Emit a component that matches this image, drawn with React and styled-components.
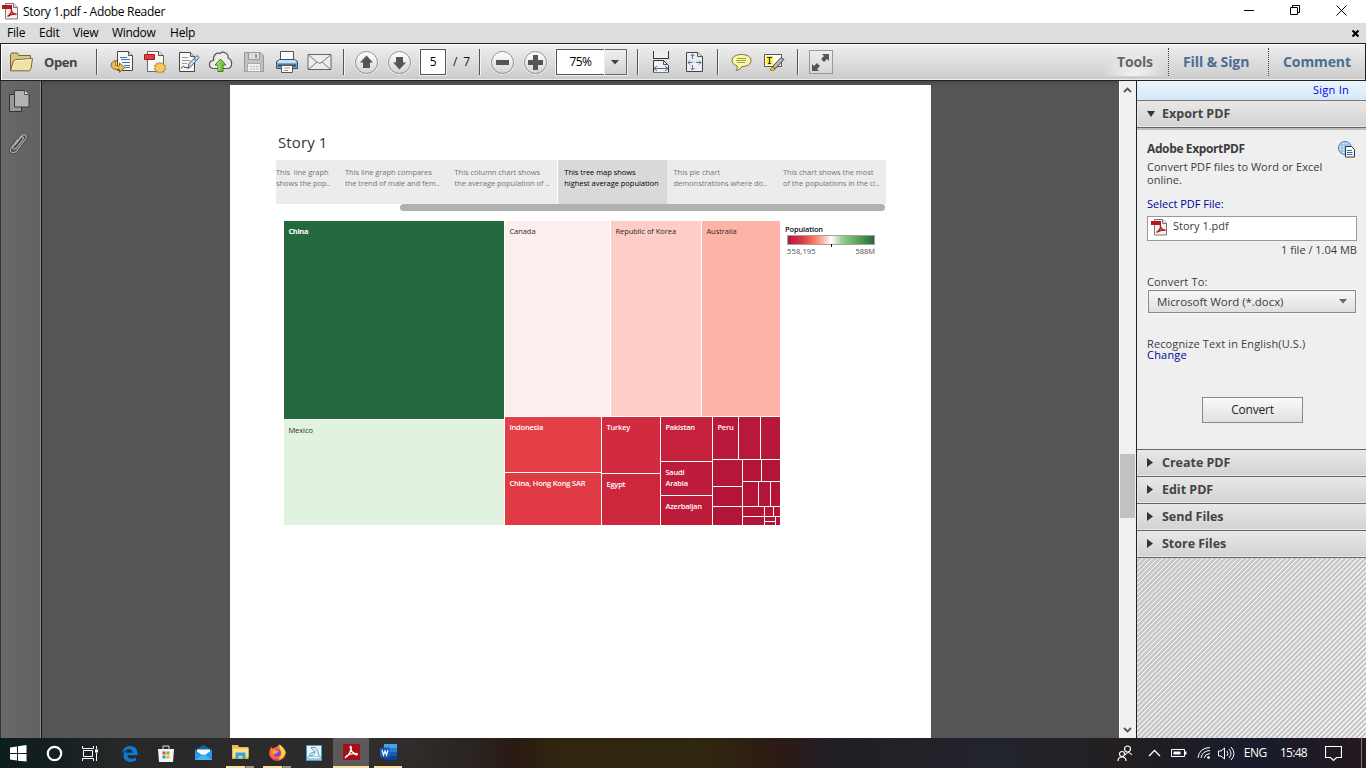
import React from "react";
import styled, { createGlobalStyle, css } from "styled-components";

const Global = createGlobalStyle`
  * { box-sizing: border-box; }
  body { margin: 0; overflow: hidden; font-family: "Open Sans", "Noto Sans", sans-serif; font-size: 12px; color: #444; }
  svg { display: block; flex: none; }
`;

const Window = styled.div`
  width: 1366px; height: 768px; display: flex; flex-direction: column; background: #555;
`;
const Text = styled.span`
  white-space: pre; display: block; line-height: ${p => p.$lh || 16}px;
  font-size: ${p => p.$size || 12}px; font-weight: ${p => p.$weight || 400};
  letter-spacing: ${p => p.$ls || 0}px; color: ${p => p.$color || "inherit"};
  margin: ${p => p.$m || 0};
`;

/* Title bar and menu */
const TitleBar = styled.header`
  height: 23px; background: #fff; color: #000; display: flex; align-items: center; padding-left: 2px;
`;
const WindowButtons = styled.div`
  margin-left: auto; display: flex; padding: 0 2px 3px 0;
`;
const WindowButton = styled.div`
  width: 46px; display: flex; justify-content: center; align-items: center;
`;
const MenuBar = styled.nav`
  height: 20px; background: #ddd; color: #000; display: flex; align-items: center; padding-left: 7px;
`;
const MenuItem = styled(Text)` width: ${p => p.$w}px; `;
const CloseDoc = styled.div` margin-left: auto; padding-right: 7px; `;

/* Toolbar */
const Toolbar = styled.div`
  height: 38px; border: 1px solid #222;
  box-shadow: inset 1px 1px 0 #fff, inset 0 -1px 0 #eee; background: linear-gradient(#efefef, #cbcbcb);
  display: flex; align-items: center; flex: none; padding-left: 8px;
`;
const OpenButton = styled.div` display: flex; align-items: center; width: 87px; gap: 10px; `;
const Divider = styled.i`
  width: 2px; height: 26px; background: #555; border-right: 1px solid #f4f4f4; margin: 0 ${p => p.$r || 0}px 0 ${p => p.$l || 0}px; flex: none;
`;
const Tool = styled.div`
  width: 33px; height: 28px; flex: none; display: flex; align-items: center; justify-content: center;
`;
const Round = styled.div`
  width: 23px; height: 23px; border-radius: 50%; border: 1px solid #929292; box-shadow: 0 0 0 1px #e9e9e9;
  background: linear-gradient(#fff, #d5d5d5); display: flex; align-items: center; justify-content: center;
`;
const Field = styled.div`
  height: 26px; width: ${p => p.$w}px; border: 1px solid #555; outline: 1px solid #eee; background: #fff; color: #000;
  display: flex; align-items: center; justify-content: center; flex: none; margin-left: 4px;
`;
const DropArrow = styled.div`
  width: 22px; height: 26px; border: 1px solid #666; border-left: 0; outline: 1px solid #eee; background: linear-gradient(#f1f1f1, #d2d2d2);
  display: flex; align-items: center; justify-content: center; flex: none;
`;
const FullScreen = styled.div`
  width: 24px; height: 24px; border: 1px solid #999; background: linear-gradient(#eee, #d6d6d6); margin-left: 10px;
  display: flex; align-items: center; justify-content: center;
`;
const ToolTabs = styled.div` margin-left: auto; height: 36px; display: flex; align-items: center; `;
const ToolTab = styled.div`
  width: ${p => p.$w}px; height: 28px; display: flex; align-items: center; padding-left: ${p => p.$pl}px;
  border-right: ${p => (p.$last ? "0" : "1px dotted #444")};
  ${p => p.$active && css`background: radial-gradient(ellipse at 50% 100%, #f3f3f3, rgba(220,220,220,0) 70%);`}
`;

/* Work area */
const Work = styled.main` flex: 1; min-height: 0; display: flex; background: #555; `;
const SideRail = styled.aside`
  width: 42px; border-left: 1px solid #333; border-right: 1px solid #161616; box-shadow: inset -1px 0 0 #8b8b8b;
  background: linear-gradient(90deg, #696969, #616161); display: flex; flex-direction: column; align-items: center; padding: 8px 6px 0 1px; gap: 19px;
`;
const Canvas = styled.section`
  flex: 1; display: flex; padding: 4px 0 0 188px; background: linear-gradient(#484848, #555 5px);
`;
const Page = styled.article` width: 701px; background: #fff; padding: 48px 0 0 46px; `;
const StoryNav = styled.div` display: flex; width: 610px; height: 44px; background: #ececec; `;
const StoryPoint = styled.div`
  width: ${p => p.$w}px; padding: 7px 0 0 ${p => p.$pl}px; color: #757575; flex: none;
  ${p => p.$active && css`background: #d9d9d9; color: #000; border-left: 1px solid #fff;`}
`;
const StoryScroll = styled.div` width: 485px; height: 7px; border-radius: 4px; background: #b1b1b1; margin: 0 0 10px 124px; `;
const Viz = styled.div` display: flex; padding-left: 8px; `;
const Split = styled.div`
  display: flex; flex-direction: ${p => (p.$col ? "column" : "row")}; gap: 1px; flex: none;
  width: ${p => (p.$w ? p.$w + "px" : "auto")}; height: ${p => (p.$h ? p.$h + "px" : "auto")};
`;
const Cell = styled.div`
  flex: none; width: ${p => p.$w}px; height: ${p => p.$h}px; background: ${p => p.$bg || "#b31539"};
  color: ${p => (p.$dark ? "#2b2b2b" : "#fff")}; padding: ${p => (p.$label ? "5px 0 0 4.4px" : 0)}; overflow: hidden;
`;
const Legend = styled.div` width: 96px; padding: 3px 0 0 5px; `;
const Ramp = styled.div`
  width: 88px; height: 10px; margin-left: 2px; border: 1px solid #a8a198; display: flex; justify-content: center;
  background: linear-gradient(90deg, #b0173f, #dd3e49 18%, #f9745f 30%, #fdb1a2 40%, #fff 50%, #93cf8e 63%, #57a85e 80%, #24693d);
`;
const Tick = styled.i` width: 1px; height: 3px; margin-top: 8px; background: #000; `;
const RampLabels = styled.div` display: flex; justify-content: space-between; width: 88px; margin-left: 2px; color: #4c4c4c; `;

/* Scroll bar */
const Scrollbar = styled.div`
  width: 17px; background: #f0f0f0; display: flex; flex-direction: column; align-items: center; padding: 6px 1px 5px 0;
  border-left: 1px solid #fff;
`;
const Thumb = styled.div` width: 15px; height: 64px; background: #c1c1c1; margin: 361px 0 auto; `;

/* Right panel */
const Panel = styled.aside` width: 230px; border-left: 1px solid #222; background: #efefef; display: flex; flex-direction: column; `;
const SignIn = styled.div`
  height: 20px; flex: none; background: linear-gradient(#eaf5fe, #d5e8f8); border-bottom: 1px solid #777;
  display: flex; justify-content: flex-end; padding-right: 17px; color: #00e;
`;
const Section = styled.div`
  height: 27px; flex: none; background: linear-gradient(#e8e8e8, #d2d2d2); border-bottom: 1px solid #666;
  border-top: ${p => (p.$top ? "1px solid #666" : "0")};
  box-shadow: inset 1px -1px 0 #e9e9e9; display: flex; align-items: center; padding: 0 0 1px 10px; gap: 7px; color: #444;
  ${p => p.$top && css`height: 28px;`}
`;
const PanelBody = styled.div`
  height: 321px; flex: none; padding: 13px 9px 0 10px; display: flex; flex-direction: column; align-items: flex-start;
  box-shadow: inset 0 2px 0 #bdbdbd; color: #3c3c3c;
`;
const Heading = styled.div` display: flex; justify-content: space-between; width: 208px; height: 19px; `;
const FileBox = styled.div`
  width: 210px; height: 25px; background: #fff; border: 1px solid #999; display: flex; align-items: flex-start; padding: 2px 3px; gap: 5px; margin-top: 5px;
`;
const Select = styled.div`
  width: 208px; height: 23px; margin: 0 0 0 1px; border: 1px solid #888; outline: 1px solid #f8f8f8; background: linear-gradient(#f8f8f8, #dfdfdf);
  display: flex; align-items: center; justify-content: space-between; padding: 0 8px 0 8px;
`;
const Button = styled.div`
  width: 101px; height: 26px; border: 1px solid #888; background: linear-gradient(#f9f9f9, #e0e0e0); color: #222;
  display: flex; align-items: center; justify-content: center; margin: 37px 0 0 55px;
`;
const Hatch = styled.div`
  flex: 1; background: repeating-linear-gradient(135deg, #fafafa 0 1px, #c8c8c8 1.4px 3.54px);
`;

/* Taskbar */
const Taskbar = styled.footer`
  height: 30px; flex: none; display: flex; color: #fff;
  background: linear-gradient(90deg, #0c1d20 0, #141f20 50px, #272829 120px, #302e2d 400px, #2a2422 470px, #2a1a12 515px, #30260f 560px, #30270f 700px, #2c1a14 780px, #211f25 830px, #22242c 1000px, #231f22 1120px, #181c2c 1250px, #24191f 1366px);
`;
const Task = styled.div`
  width: ${p => p.$w || 37}px; height: 30px; display: flex; flex-direction: column; align-items: center; flex: none;
  margin-left: ${p => p.$ml || 0}px;
`;
const Glyph = styled.div`
  flex: 1; width: ${p => (p.$on ? "36px" : "100%")}; display: flex; align-items: center; justify-content: center;
  background: ${p => (p.$on ? "#5b5959" : "none")};
`;
const Underline = styled.i`
  height: 2px; width: ${p => p.$w || 28}px;
  background: ${p => (p.$stack ? "linear-gradient(90deg,#fbdfa0 19px,#6d6450 19px,#6d6450 20px,#a39576 20px)" : "#fbdfa0")};
`;
const Tray = styled.div` margin-left: auto; display: flex; align-items: center; `;
const TrayIcon = styled.div` margin-right: ${p => p.$r}px; `;
const ShowDesktop = styled.i` width: 1px; height: 30px; background: #777; margin: 0 4px 0 19px; `;

/* Drawings */
const PdfIcon = ({ s = 17 }) => (
  <svg width={s} height={s} viewBox="0 0 17 17">
    <path d="M3.500.5h8l4 3.500v12h-12z" fill="#f5f2f2" stroke="#867575" />
    <path d="M11.500.5v4h4" fill="#ddd" stroke="#867575" />
    <path d="M0 2h10v4H0z" fill="#b51620" />
    <path d="M5.500 13.500C8 12 10.500 8.500 9.300 6.500c0 3 2.500 5 5.200 4.700c-3-.5-6 .3-9 2.300" fill="none" stroke="#b51620" strokeWidth="1.400" />
  </svg>
);
const Folder = () => (
  <svg width="25" height="20" viewBox="0 0 25 20">
    <path d="M1.500 18.500V2.800L2.500 1h6l1.400 2.500h11.600v4" fill="#d9c582" stroke="#756737" />
    <path d="M1.500 18.800L4 10l2-2.200 17.500-1.200-1.500 10-1.500 2.200z" fill="#f2e2aa" stroke="#756737" strokeLinejoin="round" />
    <path d="M5 10l2-1.400 15.500-.8" stroke="#fff6d0" fill="none" />
  </svg>
);
const Share = () => (
  <svg width="24" height="24" viewBox="0 0 24 24">
    <path d="M7.500 1.500h11l4 4v15h-15z" fill="#f7f7f7" stroke="#454545" /><path d="M18.500 1.500v4h4" fill="#ddd" stroke="#555" />
    <path d="M10 7.500h7M11 9.500h9M12 12.500h8M14 15.500h6M14 17.500h6" stroke="#3977c4" />
    <path d="M6.500 10.500C0 11 0 17 3.500 18.800c2 .8 4 .7 6 .4v3.200l5.200-4.700-5.200-4.700v2.700c-3.500.8-5.500-1-3-4.800z" fill="#f0bd4c" stroke="#8b6422" />
  </svg>
);
const CreatePdf = () => (
  <svg width="24" height="24" viewBox="0 0 24 24">
    <path d="M4.500 1.500h11l5 4v16h-16z" fill="#f7f7f7" stroke="#666" /><path d="M15.500 1.500v4h5" fill="#ddd" stroke="#555" />
    <path d="M1.500 4.500h10v5h-10z" fill="#e23c42" stroke="#a51e24" />
    <path d="m17 12 1.300 1.800 2-.9.2 2.200 2.200.3-1 2 1.300 1.800-2.100.9-.2 2.100-2.200-.4-1.500 1.600-1.500-1.600-2.200.4-.2-2.100-2.100-.9 1.300-1.800-1-2 2.200-.3.2-2.200 2 .9z" fill="#f6c860" stroke="#aa7929" strokeWidth=".8" />
  </svg>
);
const EditSign = () => (
  <svg width="24" height="24" viewBox="0 0 24 24">
    <path d="M3.500 2.500h11l4 4v15h-15z" fill="#f7f7f7" stroke="#454545" /><path d="M14.500 2.500v4h4" fill="#ccc" stroke="#555" />
    <path d="M6 7.500h6M6 10.500h8M6 13.500h5" stroke="#999" /><path d="M5 18.500q3-4 3.500-1l5 .5" stroke="#444" fill="none" />
    <path d="m12 18 1-4.500L21 5.500l2 2-8 9z" fill="#c3dbee" stroke="#44607c" /><path d="m18 8.500 2.500 2" stroke="#44607c" />
  </svg>
);
const Cloud = () => (
  <svg width="25" height="24" viewBox="0 0 25 24">
    <path d="M6 18.500c-6 0-6-8-.5-8C5 4 9 2.500 12 3.500c3-3 9 0 8 4.500 5 2 5 10.500-1 10.500z" fill="#ececec" stroke="#555" strokeWidth="1.200" />
    <path d="M12.500 9l5.500 6h-3v6.500h-5V15H7z" fill="#76c83d" stroke="#3c7b20" />
    <path d="M12.500 10.500l-3.300 3.700H11v6" fill="none" stroke="#bdf092" />
  </svg>
);
const Save = () => (
  <svg width="22" height="22" viewBox="0 0 22 22">
    <path d="M1.500 1.500h16l3 3v16h-19z" fill="#c1c1c1" stroke="#989898" />
    <path d="M5.500 1.500h11v7h-11z" fill="#dedede" stroke="#999" /><path d="M12 3h2v4h-2z" fill="#999" />
    <path d="M4.500 12.500h13v8h-13z" fill="#eee" stroke="#aaa" /><path d="M7 15.500h8M7 18h8" stroke="#bbb" strokeDasharray="2 1" />
  </svg>
);
const Print = () => (
  <svg width="24" height="24" viewBox="0 0 24 24">
    <path d="M5.500 10V1.500h13V10" fill="#fff" stroke="#555" />
    <path d="M1.500 18.500v-7l3-2h15l3 2v7z" fill="#78a5cd" stroke="#36536e" />
    <path d="M4 10h16l2 3H2z" fill="#c8dfef" /><path d="M3 15.500h18" stroke="#31475d" strokeWidth="2" />
    <path d="M6.500 15.500h11v7h-11z" fill="#fafafa" stroke="#555" /><path d="M9 18h6M9 20.500h4" stroke="#999" />
  </svg>
);
const Mail = () => (
  <svg width="25" height="18" viewBox="0 0 25 18">
    <path d="M1 1.500h23v15H1z" fill="#eee" stroke="#656565" />
    <path d="m1.500 2 9 7.500q2 1.500 4 0l9-7.500M2 16l8-7M23 16l-8-7" fill="none" stroke="#777" />
  </svg>
);
const Arrow = ({ down }) => (
  <svg width="15" height="15" viewBox="0 0 15 15"><path transform={down ? "rotate(180 7.500 7.500)" : undefined} d="M7.500 0.500 14 7.500h-3V13H4V7.500H1z" fill="#555" /></svg>
);
const FitWidth = () => (
  <svg width="18" height="22" viewBox="0 0 18 22">
    <path d="M1.500 0v7.500h15V0" fill="#eee" stroke="#333" /><path d="M1.500 21V9.500h10l5 5V21" fill="#eee" stroke="#333" />
    <path d="M11.500 9.500v4h4" fill="none" stroke="#555" /><path d="M2 17.500h14M5 15l-3 2.500L5 20m8-5 3 2.500-3 2.500" stroke="#4865a5" fill="none" /><path d="M1 21.500h16" stroke="#777" />
  </svg>
);
const FitPage = () => (
  <svg width="19" height="22" viewBox="0 0 19 22">
    <path d="M1.500 1.500h11l5 4v15h-16z" fill="#eee" stroke="#444" /><path d="M12.500 1.500v4h5" fill="#ddd" stroke="#555" />
    <path d="M7.500 3v5M7.500 14v5M3 11.500h4M11 11.500h5M5.500 5l2-2 2 2m-4 12 2 2 2-2M5 9.500l-2 2 2 2m9-4 2 2-2 2" stroke="#5470aa" fill="none" />
    <path d="M7 11h5" stroke="#8b9cc0" strokeDasharray="1 1" />
  </svg>
);
const Comment = () => (
  <svg width="21" height="19" viewBox="0 0 21 19">
    <path d="M10.500 1.500c5.500 0 9.500 2.200 9.500 6s-4 6-9 6c-1 2-4 4-6 4 1.200-1.300 1.600-3 1.200-4.500C3.200 12 1 10.300 1 7.500c0-3.800 4.500-6 9.500-6z" fill="#fbf8a5" stroke="#76703a" />
    <path d="M6 5.500h9M5 7.500h10M6 9.500h8" stroke="#a39c55" />
  </svg>
);
const Highlight = () => (
  <svg width="22" height="20" viewBox="0 0 22 20">
    <path d="M1.500 2.500h17v12h-17z" fill="#fff" stroke="#555" /><path d="M3 4h7v9H3z" fill="#fff32c" />
    <path d="M4 5.500h5M6.500 5v6M5 11.500h3" stroke="#333" strokeWidth="1.200" />
    <path d="m10 14 8-8.500 3 2-8 8.500-3 1z" fill="#b5b5b5" stroke="#484848" /><path d="m7 18 2.500-3 2.500 2.500-2.500 1z" fill="#f4ea2a" stroke="#807916" />
  </svg>
);
const Tri = ({ open }) => (
  <svg width="8" height="9" viewBox="0 0 8 9"><path d={open ? "M0 2h8L4 8z" : "M0 0v9l6-4.500z"} fill="#333" /></svg>
);
const Caret = ({ c = "#666" }) => <svg width="8" height="5" viewBox="0 0 8 5"><path d="M0 0h8L4 4.500z" fill={c} /></svg>;
const clipPath = "m7 13 6-7.500c1.500-1.500 3.500 0 2 2L8.500 16c-2.500 2.500-5 .5-3-2L13 4.500C16 1 20 3.500 17.500 7L9 18.500c-3.500 4-8.500 1.500-6-2.500l7-9";
const Clip = () => (
  <svg width="22" height="24" viewBox="0 0 22 24" fill="none">
    <path d={clipPath} stroke="#3e3e3e" strokeWidth="2.600" /><path d={clipPath} stroke="#b0b0b0" strokeWidth="1.200" />
  </svg>
);

const C = ({ w, h, c, t, dark, wt, ls }) => (
  <Cell $w={w} $h={h} $bg={c} $dark={dark} $label={Boolean(t)}>
    {t && <Text $size={7.5} $lh={11} $weight={wt || (dark ? 500 : 600)} $ls={ls ?? (dark ? -0.05 : -0.2)}>{t}</Text>}
  </Cell>
);

const points = [
  { w: 62.5, pl: 0, t: "This  line graph\nshows the pop.." },
  { w: 109.5, pl: 6.5, t: "This line graph compares\nthe trend of male and fem.." },
  { w: 109, pl: 6.5, t: "This column chart shows\nthe average population of .." },
  { w: 110, pl: 6.3, t: "This tree map shows\nhighest average population", active: true },
  { w: 109.5, pl: 6.5, t: "This pie chart\ndemonstrations where do.." },
  { w: 109.5, pl: 6.5, t: "This chart shows the most\nof the populations in the ci.." },
];

const TreeMap = () => (
  <Split>
    <Split $col $w={220}>
      <C w={220} h={198} c="#24693d" t="China" wt={700} ls={-0.35} />
      <C w={220} h={105} c="#e1f3e0" t="Mexico" dark />
    </Split>
    <Split $col $w={275}>
      <Split>
        <C w={105} h={195} c="#fbeeed" t="Canada" dark />
        <C w={90} h={195} c="#ffcdc7" t="Republic of Korea" dark />
        <C w={78} h={195} c="#feb3a7" t="Australia" dark />
      </Split>
      <Split>
        <Split $col>
          <C w={96} h={55} c="#e43f46" t="Indonesia" />
          <C w={96} h={52} c="#e03b44" t="China, Hong Kong SAR" />
        </Split>
        <Split $col>
          <C w={58} h={56} c="#d22b40" t="Turkey" />
          <C w={58} h={51} c="#cd273e" t="Egypt" />
        </Split>
        <Split $col>
          <C w={51} h={44} c="#c5203c" t="Pakistan" />
          <C w={51} h={33} c="#bf1c3b" t={"Saudi\nArabia"} />
          <C w={51} h={29} c="#bd1b3a" t="Azerbaijan" />
        </Split>
        <Split $col>
          <Split>
            <C w={25} h={42} c="#b9193a" t="Peru" />
            <C w={21} h={42} c="#b81839" />
            <C w={19} h={42} c="#b71839" />
          </Split>
          <Split>
            <Split $col>
              <C w={29} h={26} c="#b51739" />
              <C w={29} h={19} />
              <C w={29} h={18} />
            </Split>
            <Split $col>
              <Split><C w={18} h={21} /><C w={18} h={21} /></Split>
              <Split><C w={15} h={24} /><C w={11} h={24} /><C w={9} h={24} /></Split>
              <Split>
                <Split $col><C w={21} h={9} /><C w={21} h={8} /></Split>
                <Split $col>
                  <Split><C w={8} h={9} /><C w={6} h={9} /></Split>
                  <Split>
                    <Split $col><C w={10} h={4} /><C w={10} h={3} /></Split>
                    <C w={4} h={8} />
                  </Split>
                </Split>
              </Split>
            </Split>
          </Split>
        </Split>
      </Split>
    </Split>
  </Split>
);

const WinLogo = () => <svg width="17" height="17" viewBox="0 0 17 17"><path d="M0 2.500 7 1.500V8H0zM8 1.300 16.500 0v8H8zM0 9h7v6.500l-7-1zM8 9h8.500v7.500L8 15.700z" fill="#fff" /></svg>;
const Cortana = () => <svg width="17" height="17" viewBox="0 0 17 17"><circle cx="8.500" cy="8.500" r="6.700" fill="none" stroke="#fff" strokeWidth="2.200" /></svg>;
const TaskView = () => (
  <svg width="17" height="17" viewBox="0 0 17 17" fill="none" stroke="#fff">
    <path d="M.5 1v2.500h11V1M.5 16v-2.500h11V16M1.500 5.500h9v6h-9zM14.500 1v3M14.500 8v8" /><path d="M13 4.500h3v3h-3z" fill="#fff" stroke="none" />
  </svg>
);
const Edge = () => <svg width="17" height="17" viewBox="0 0 17 17"><path d="M1 8.200C1.500 3 5 1 9 1c5 0 7.500 3.500 7.500 8v1.300h-10c0 4 5 4.300 8.500 2.200v3C9 18.500 2.300 16.500 2.500 10.500c0-3 2-5 4-5.800-1 .8-1.300 1.800-1.500 3h6.500C11.500 2.500 4 3.500 1 8.200z" fill="#0b7ad7" /></svg>;
const Store = () => (
  <svg width="16" height="17" viewBox="0 0 16 17">
    <path d="M0 4h16l-1 13H1z" fill="#f4f4f4" /><path d="M5 5V1h6v4" fill="none" stroke="#ddd" />
    <path d="M4.500 6.500h3v3h-3z" fill="#e74c26" /><path d="M8.500 6.500h3v3h-3z" fill="#77b81e" /><path d="M4.500 10.500h3v3h-3z" fill="#1ba0df" /><path d="M8.500 10.500h3v3h-3z" fill="#f4b717" />
  </svg>
);
const MailApp = () => <svg width="17" height="16" viewBox="0 0 17 16"><path d="M0 5 8.500 0 17 5v10H0z" fill="#1164a5" /><path d="M2 4.500h13V10H2z" fill="#f3f8fc" /><path d="m0 5 8.500 6L17 5v10H0z" fill="#2899df" /><path d="m0 15 8.500-6 8.500 6z" fill="#42b8ee" /></svg>;
const Explorer = () => <svg width="17" height="16" viewBox="0 0 17 16"><path d="M0 1h6l1 2h9.500v12H0z" fill="#efb947" /><path d="M1 4.500h15.500V13H1z" fill="#ffe18b" /><path d="M3.500 15V8.500h10V15h-3v-3h-4v3z" fill="#37a5e0" /></svg>;
const Firefox = () => (
  <svg width="17" height="17" viewBox="0 0 17 17">
    <path d="M2 3l2 1.500c2-1.500 4-1 5-3l2-1c0 2 4 3 5.500 7 .8 5-3 9.200-8 9.200S-.5 13 .5 8C.7 6 1.200 4.500 2 3z" fill="#ff7139" />
    <path d="M10.500.5c3 2 6 5 6 8.500-1 4-4.500 6-8 6C12 13 13 10 12 7c-1-2-2-3-1.500-6.500z" fill="#ffd23a" />
    <circle cx="8" cy="9" r="3.800" fill="#8147dc" /><path d="M4 6c3-1 4 1 6 1-1 2-4 2-5 4C3 10 3 7 4 6z" fill="#ff9c38" /><path d="M1 10c1 4 5 6 9 4-2 4-9 2-9-4z" fill="#f0305f" />
  </svg>
);
const Sketch = () => <svg width="16" height="16" viewBox="0 0 16 16"><path d="M.5.5h15v15H.5z" fill="#e8f5fa" stroke="#4b9ec3" /><path d="M1 11h14v4H1z" fill="#9dcde3" /><path d="M5 2.500h4c2.500 1.500 3 4 4 8.500M5 3l4 3.500c0 2-1 3-3 4H3M9 6.500 3.500 9" stroke="#5c9dbc" fill="none" /><path d="M3 12.500h10" stroke="#fff" /></svg>;
const Acrobat = () => <svg width="17" height="16" viewBox="0 0 17 16"><path d="M0 0h17v16H0z" fill="#a80e15" /><path d="M2.500 13.500C6 12 9 5 8 2.500 6.500 1.500 7 7 12 10.500c3 1.500 3.500-1.500-.5-1.200C8 9.500 3 11 2.500 13.500z" fill="none" stroke="#fff" strokeWidth="1.300" /></svg>;
const Word = () => (
  <svg width="17" height="16" viewBox="0 0 17 16"><path d="M4 0h13v16H4z" fill="#2b7cd3" /><path d="M4 0h13v4H4z" fill="#41a5ee" /><path d="M4 8h13v4H4z" fill="#185abd" /><path d="M4 12h13v4H4z" fill="#103f91" /><rect y="3.500" width="10" height="10" rx="1" fill="#185abd" /><path d="m2 6 1.500 5L5 7l1.500 4L8 6" fill="none" stroke="#fff" strokeWidth="1.200" /></svg>
);

const apps = [
  { i: <Edge /> }, { i: <Store /> }, { i: <MailApp /> }, { i: <Explorer />, u: "stack" }, { i: <Firefox />, u: "stack" },
  { i: <Sketch /> }, { i: <Acrobat />, u: "on" }, { i: <Word />, u: "one" },
];

export default function App() {
  return (
    <Window>
      <Global />
      <TitleBar>
        <PdfIcon />
        <Text $m="0 0 0 4px" $ls={-0.31}>Story 1.pdf - Adobe Reader</Text>
        <WindowButtons>
          <WindowButton><svg width="10" height="11"><path d="M0 5.500h10" stroke="#000" /></svg></WindowButton>
          <WindowButton><svg width="11" height="11" fill="none" stroke="#000"><path d="M.5 2.500h7v7h-7zM2.500 2V.5h7v7H8" /></svg></WindowButton>
          <WindowButton><svg width="11" height="11"><path d="m.5.500 10 10m0-10-10 10" stroke="#000" /></svg></WindowButton>
        </WindowButtons>
      </TitleBar>
      <MenuBar>
        <MenuItem $w={32} $ls={-0.2}>File</MenuItem>
        <MenuItem $w={34} $ls={-0.2}>Edit</MenuItem>
        <MenuItem $w={39} $ls={-0.2}>View</MenuItem>
        <MenuItem $w={58} $ls={-0.3}>Window</MenuItem>
        <MenuItem $w={40} $ls={-0.2}>Help</MenuItem>
        <CloseDoc><svg width="7" height="7"><path d="m.5.500 6 6m0-6-6 6" stroke="#000" strokeWidth="2.200" /></svg></CloseDoc>
      </MenuBar>
      <Toolbar>
        <OpenButton><Folder /><Text $size={13} $weight={700} $ls={-0.4}>Open</Text></OpenButton>
        <Divider $r={7} />
        <Tool><Share /></Tool><Tool><CreatePdf /></Tool><Tool><EditSign /></Tool><Tool><Cloud /></Tool>
        <Tool><Save /></Tool><Tool><Print /></Tool><Tool><Mail /></Tool>
        <Divider $l={7} $r={5} />
        <Tool><Round><Arrow /></Round></Tool><Tool><Round><Arrow down /></Round></Tool>
        <Field $w={26}><Text $ls={-0.3}>5</Text></Field>
        <Text $m="0 0 0 7px" $color="#111" $ls={-0.15}>{"/  7"}</Text>
        <Divider $l={9} $r={5} />
        <Tool><Round><svg width="13" height="5"><rect width="13" height="5" fill="#555" /></svg></Round></Tool>
        <Tool><Round><svg width="15" height="15"><path d="M5 0h5v5h5v5h-5v5H5v-5H0V5h5z" fill="#555" /></svg></Round></Tool>
        <Field $w={49}><Text $ls={-0.6}>75%</Text></Field><DropArrow><Caret c="#444" /></DropArrow>
        <Divider $l={10} $r={6} />
        <Tool><FitWidth /></Tool><Tool><FitPage /></Tool>
        <Divider $l={6} $r={6} />
        <Tool><Comment /></Tool><Tool><Highlight /></Tool>
        <Divider $l={6} />
        <FullScreen><svg width="19" height="19"><path d="M11 1h7v7l-2-2-3 3-3-3 3-3zM1 18v-7l2 2 3-3 3 3-3 3 2 2z" fill="#555" /></svg></FullScreen>
        <ToolTabs>
          <ToolTab $w={68} $pl={16} $active><Text $size={14} $weight={700} $ls={-0.15} $color="#666">Tools</Text></ToolTab>
          <ToolTab $w={100} $pl={14}><Text $size={14} $weight={700} $color="#4c6c96" $ls={-0.1}>Fill &amp; Sign</Text></ToolTab>
          <ToolTab $w={96} $pl={14} $last><Text $size={14} $weight={700} $color="#4c6c96" $ls={-0.1}>Comment</Text></ToolTab>
        </ToolTabs>
      </Toolbar>
      <Work>
        <SideRail>
          <svg width="22" height="24" viewBox="0 0 22 24"><path d="M1.500 5.500h12v17h-12z" fill="#999" stroke="#333" /><path d="M6.500 1.500h10l4.500 4v12.500H6.500z" fill="#b3b3b3" stroke="#393939" /><path d="M16.500 1.500v4H21" fill="#ddd" stroke="#555" /></svg>
          <Clip />
        </SideRail>
        <Canvas>
          <Page>
            <Text $size={15} $lh={18} $ls={0.1} $color="#333" $m="0 0 9px 2px">Story 1</Text>
            <StoryNav>
              {points.map(p => (
                <StoryPoint key={p.t} $w={p.w} $pl={p.pl} $active={p.active}><Text $size={7.5} $lh={11} $ls={-0.04}>{p.t}</Text></StoryPoint>
              ))}
            </StoryNav>
            <StoryScroll />
            <Viz>
              <TreeMap />
              <Legend>
                <Text $size={7.5} $lh={11} $weight={600} $color="#111" $ls={-0.15}>Population</Text>
                <Ramp><Tick /></Ramp>
                <RampLabels><Text $size={7.5} $lh={12} $ls={0.15}>558,195</Text><Text $size={7.5} $lh={12}>588M</Text></RampLabels>
              </Legend>
            </Viz>
          </Page>
        </Canvas>
        <Scrollbar>
          <svg width="9" height="6"><path d="m1 5 3.500-3.500L8 5" stroke="#555" strokeWidth="1.800" fill="none" /></svg>
          <Thumb />
          <svg width="9" height="6"><path d="m1 1 3.500 3.500L8 1" stroke="#555" strokeWidth="1.800" fill="none" /></svg>
        </Scrollbar>
        <Panel>
          <SignIn><Text $size={11} $lh={18} $ls={0.25}>Sign In</Text></SignIn>
          <Section><Tri open /><Text $size={12.5} $weight={700} $ls={0.02}>Export PDF</Text></Section>
          <PanelBody>
            <Heading>
              <Text $weight={700} $ls={-0.38}>Adobe ExportPDF</Text>
              <svg width="17" height="17" viewBox="0 0 17 17"><circle cx="7" cy="7" r="6.500" fill="#dceeff" stroke="#3674b3" /><path d="M1 4h12M.5 7h13M1 10h12M4 1v12M7 0v14M10 1v12" stroke="#6ea8db" strokeWidth=".8" /><path d="M7.500 5.500h6l3 3v7.500h-9z" fill="#fff" stroke="#333" /><path d="M9 9.500h5M9 11.500h5.500M9 13.500h5.500" stroke="#2370bd" /></svg>
            </Heading>
            <Text $size={11} $lh={13} $ls={0.03}>{"Convert PDF files to Word or Excel\nonline."}</Text>
            <Text $size={11} $lh={14} $m="11px 0 0" $color="#00009c">Select PDF File:</Text>
            <FileBox><PdfIcon /><Text $size={11} $lh={13}>Story 1.pdf</Text></FileBox>
            <Text $size={11} $lh={16} $m="1px 0 0 134px">1 file / 1.04 MB</Text>
            <Text $size={11} $lh={16} $m="16px 0 0" $ls={0.15}>Convert To:</Text>
            <Select><Text $size={11.5} $ls={-0.05}>Microsoft Word (*.docx)</Text><Caret /></Select>
            <Text $size={11} $lh={11} $m="25px 0 0" $ls={0.13}>Recognize Text in English(U.S.)</Text>
            <Text $size={11} $lh={11} $ls={0.2} $color="#00009c">Change</Text>
            <Button><Text $size={12} $ls={-0.2}>Convert</Text></Button>
          </PanelBody>
          {["Create PDF", "Edit PDF", "Send Files", "Store Files"].map((t, i) => (
            <Section key={t} $top={i === 0}><Tri /><Text $size={12.5} $weight={700} $ls={-0.02}>{t}</Text></Section>
          ))}
          <Hatch />
        </Panel>
      </Work>
      <Taskbar>
        <Task $w={36}><Glyph><WinLogo /></Glyph></Task>
        <Task $w={36}><Glyph><Cortana /></Glyph></Task>
        <Task $w={36}><Glyph><TaskView /></Glyph></Task>
        {apps.map((a, i) => (
          <Task key={i} $ml={i ? 0 : 2.5}>
            <Glyph $on={a.u === "on"}>{a.i}</Glyph>
            {a.u && <Underline $stack={a.u === "stack"} $w={a.u === "on" ? 36 : 28} />}
          </Task>
        ))}
        <Tray>
          <TrayIcon $r={15}><svg width="16" height="17" viewBox="0 0 16 17" fill="none" stroke="#fff" strokeWidth="1.200"><circle cx="10.500" cy="4" r="3" /><path d="M8 10q3-5 7 0" /><circle cx="5" cy="9" r="2.500" /><path d="M1 16q0-4 4-4t4 4" /></svg></TrayIcon>
          <TrayIcon $r={10}><svg width="13" height="8"><path d="m1 7 5.500-5.500L12 7" stroke="#fff" strokeWidth="1.300" fill="none" /></svg></TrayIcon>
          <TrayIcon $r={10}><svg width="16" height="10"><path d="M.5 1.500h13v7H.5z" stroke="#fff" fill="none" /><path d="M2.500 3.500h7v3h-7zM14 3.500h1.500v3H14z" fill="#fff" /></svg></TrayIcon>
          <TrayIcon $r={7}><svg width="14" height="14" fill="none" stroke="#fff"><path d="M1 12Q2 2 13 1.500M4 12Q5 5 13 4.500M7 12Q8 8 13 7.500" /><circle cx="11.500" cy="11.500" r="1" fill="#fff" /></svg></TrayIcon>
          <TrayIcon $r={9}><svg width="17" height="15" fill="none" stroke="#fff"><path d="M.5 5v5h2.500L6.500 13V2L3 5zM9 5q2 2.500 0 5M11 3q4 4.500 0 9M13 1q6 6.500 0 13" /></svg></TrayIcon>
          <Text $ls={-0.4}>ENG</Text>
          <Text $m="0 18px 0 13px" $ls={-0.7}>15:48</Text>
          <svg width="17" height="17"><path d="M.5 1.500h16v11h-5L8.500 15.500l-3-3h-5z" fill="none" stroke="#fff" strokeWidth="1.200" /></svg>
          <ShowDesktop />
        </Tray>
      </Taskbar>
    </Window>
  );
}
